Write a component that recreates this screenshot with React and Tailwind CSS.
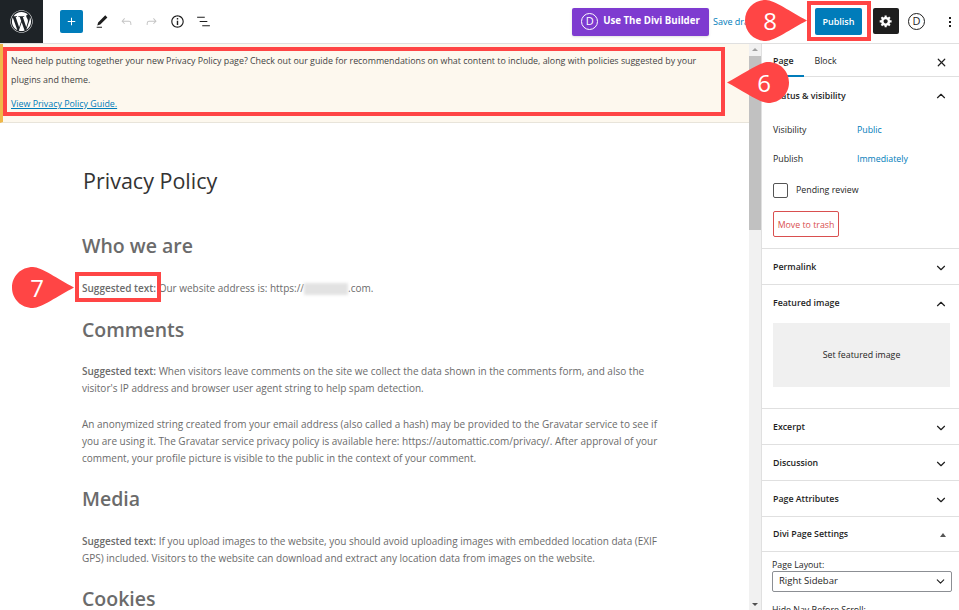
import { FaWordpress } from "react-icons/fa";
import { ChevronDown, ChevronUp, X } from "lucide-react";

function Icon({ d, className = "", box = "0 0 24 24" }) {
  return (
    <svg viewBox={box} className={className} fill="currentColor">
      <path d={d} />
    </svg>
  );
}

function DiviMark({ className }) {
  return (
    <span className={`flex items-center justify-center rounded-full border-[1.5px] ${className}`}>D</span>
  );
}

function Pointer({ n, className, tipRight }) {
  return (
    <div className={`absolute w-[62px] h-[41px] ${className}`}>
      <svg viewBox="0 0 62 41" className="absolute inset-0 w-full h-full" fill="#ff4545">
        {tipRight ? (
          <path d="M21 0C29 0 46 12 62 20.5C46 29 29 41 21 41C9 41 0 32 0 20.5S9 0 21 0z" />
        ) : (
          <path d="M41 0C33 0 16 12 0 20.5C16 29 33 41 41 41C53 41 62 32 62 20.5S53 0 41 0z" />
        )}
      </svg>
      <span
        className={`absolute top-0 h-[41px] w-[50px] flex items-center justify-center text-white text-[24px] ${tipRight ? "left-0" : "right-0"}`}
      >
        {n}
      </span>
    </div>
  );
}

function PanelRow({ title, children }) {
  return (
    <div className="flex items-center justify-between h-[36px] pt-[2px] px-[11px] border-t border-[#e0e0e0]">
      <span className="text-[8.8px] font-semibold text-[#1e1e1e]">{title}</span>
      {children || <ChevronDown size={14} strokeWidth={2} className="text-[#1e1e1e]" />}
    </div>
  );
}

function Heading({ className, children }) {
  return <h2 className={`text-[19.5px] leading-[30px] font-semibold ${className}`}>{children}</h2>;
}

function Para({ className, children }) {
  return <p className={`text-[10px] leading-[17px] ${className}`}>{children}</p>;
}

export default function App() {
  return (
    <div className="relative w-[959px] h-[610px] overflow-hidden bg-white flex flex-col font-['Open_Sans',sans-serif]">
      {/* top toolbar */}
      <header className="flex items-center h-[44px] shrink-0 border-b border-[#e0e0e0]">
        <div className="w-[43px] h-[43px] bg-[#1e2327] flex items-center justify-center text-white">
          <FaWordpress size={23} />
        </div>
        <div className="flex items-center ml-[17px] h-full">
          <button className="w-[23px] h-[23px] rounded-[2px] bg-[#007cba] flex items-center justify-center text-white">
            <Icon d="M18 11.2h-5.2V6h-1.6v5.2H6v1.6h5.2V18h1.6v-5.2H18z" className="w-[15px] h-[15px]" />
          </button>
          <Icon d="M20.1 5.1L16.9 2 6.2 12.7l-1.3 4.4 4.5-1.3L20.1 5.1zM4 20.8h8v-1.5H4v1.5z" className="w-[16px] h-[16px] ml-[11px] text-[#1e1e1e]" />
          <Icon d="M18.3 11.7c-.6-.6-1.4-.9-2.3-.9H6.7l2.9-3.3-1.1-1-4.5 5L8.5 16l1-1-2.7-2.7H16c.5 0 .9.2 1.3.5 1 1 1 3.4 1 4.5v.3h1.5v-.2c0-1.5 0-4.3-1.5-5.7z" className="w-[15px] h-[15px] ml-[9px] text-[#c4c4c4]" />
          <Icon d="M15.6 6.5l-1.1 1 2.9 3.3H8c-.9 0-1.7.3-2.3.9-1.4 1.5-1.4 4.2-1.4 5.6v.2h1.5v-.3c0-1.1 0-3.5 1-4.5.3-.3.7-.5 1.3-.5h9.2L14.5 15l1.1 1.1 4.6-4.6-4.6-5z" className="w-[15px] h-[15px] ml-[10px] text-[#c4c4c4]" />
          <Icon d="M12 3.2c-4.8 0-8.8 3.9-8.8 8.8 0 4.8 3.9 8.8 8.8 8.8 4.8 0 8.8-3.9 8.8-8.8 0-4.8-4-8.8-8.8-8.8zm0 16c-4 0-7.2-3.3-7.2-7.2C4.8 8 8 4.8 12 4.8s7.2 3.3 7.2 7.2c0 4-3.2 7.2-7.2 7.2zM11 17h2v-6h-2v6zm0-8h2V7h-2v2z" className="w-[17px] h-[17px] ml-[10px] text-[#1e1e1e]" />
          <Icon d="M13.8 5.2H3v1.5h10.8V5.2zm-3.6 12v1.5H21v-1.5H10.2zm7.2-6H6.6v1.5h10.8v-1.5z" className="w-[17px] h-[17px] ml-[9px] text-[#1e1e1e]" />
        </div>
        <div className="ml-auto flex items-center h-full">
          <button className="w-[137px] h-[28px] rounded-[2px] bg-[#7e3bd0] text-white flex items-center justify-center gap-[5px] text-[9.7px] font-bold shadow-sm">
            <DiviMark className="w-[17px] h-[17px] border-white font-normal text-[11px]" />
            Use The Divi Builder
          </button>
          <span className="ml-[4px] text-[9px] text-[#007cba] w-[102px] whitespace-nowrap">Save draft</span>
          <button className="w-[47px] h-[27px] rounded-[2px] bg-[#007cba] text-white text-[9px] font-semibold">Publish</button>
          <div className="ml-[11px] mb-px w-[26px] h-[26px] rounded-[2px] bg-[#1e1e1e] flex items-center justify-center text-white">
            <Icon box="0 0 20 20" d="M18 12h-2.18c-.17.7-.44 1.35-.81 1.93l1.54 1.54-2.1 2.1-1.54-1.54c-.58.36-1.23.63-1.91.79V19H8v-2.18c-.68-.16-1.33-.43-1.91-.79l-1.54 1.54-2.12-2.12 1.54-1.54c-.36-.58-.63-1.23-.79-1.91H1V9.03h2.17c.16-.7.44-1.35.8-1.94L2.43 5.55l2.1-2.1 1.54 1.54c.58-.37 1.24-.64 1.93-.81V2h3v2.18c.68.16 1.33.43 1.91.79l1.54-1.54 2.12 2.12-1.54 1.54c.36.59.64 1.24.8 1.94H18V12zm-8.5 1.5c1.66 0 3-1.34 3-3s-1.34-3-3-3-3 1.34-3 3 1.34 3 3 3z" className="w-[14px] h-[14px]" />
          </div>
          <DiviMark className="ml-[9px] w-[17px] h-[17px] border-[#1e1e1e] text-[#1e1e1e] text-[11px]" />
          <div className="ml-[24px] mr-[8px] flex flex-col gap-[2px]">
            <span className="w-[2px] h-[2px] bg-[#1e1e1e]" />
            <span className="w-[2px] h-[2px] bg-[#1e1e1e]" />
            <span className="w-[2px] h-[2px] bg-[#1e1e1e]" />
          </div>
        </div>
      </header>

      <div className="flex flex-1 min-h-0">
        {/* editor */}
        <main className="w-[749px] shrink-0 overflow-hidden text-[#6b6b6b]">
          <div className="h-[79px] bg-[#fdf8ee] border-l-[3px] border-[#f0b849] border-b border-b-[#e8e4da] pl-[8px] pt-[8px] text-[8.87px] leading-[19px] text-[#444]">
            <p className="w-[700px]">
              Need help putting together your new Privacy Policy page? Check out our guide for recommendations on what content to include, along with policies suggested by your plugins and theme.
            </p>
            <a className="block mt-[5px] text-[#007cba] underline">View Privacy Policy Guide.</a>
          </div>
          <article className="pl-[82px] w-[672px]">
            <h1 className="mt-[42px] ml-px text-[21.5px] leading-[32px] text-[#333]">Privacy Policy</h1>
            <Heading className="mt-[34px]">Who we are</Heading>
            <Para className="mt-[19px]">
              <strong className="font-semibold">Suggested text:</strong> Our website address is: https://
              <span className="inline-block w-[44px] h-[12px] align-middle bg-[#e2e2e2] blur-[1.5px]" />
              .com.
            </Para>
            <Heading className="mt-[18px]">Comments</Heading>
            <Para className="mt-[18px]">
              <strong className="font-semibold">Suggested text:</strong> When visitors leave comments on the site we collect the data shown in the comments form, and also the visitor's IP address and browser user agent string to help spam detection.
            </Para>
            <Para className="mt-[19px]">
              An anonymized string created from your email address (also called a hash) may be provided to the Gravatar service to see if you are using it. The Gravatar service privacy policy is available here: https://automattic.com/privacy/. After approval of your comment, your profile picture is visible to the public in the context of your comment.
            </Para>
            <Heading className="mt-[17px]">Media</Heading>
            <Para className="mt-[19px]">
              <strong className="font-semibold">Suggested text:</strong> If you upload images to the website, you should avoid uploading images with embedded location data (EXIF GPS) included. Visitors to the website can download and extract any location data from images on the website.
            </Para>
            <Heading className="mt-[17px]">Cookies</Heading>
          </article>
        </main>

        {/* editor scrollbar */}
        <div className="w-[12px] shrink-0 bg-[#f1f1f1] flex flex-col items-center">
          <span className="mt-[4px] w-0 h-0 border-x-[3px] border-x-transparent border-b-[3px] border-b-[#a0a0a0]" />
          <div className="mt-[5px] w-full h-[174px] bg-[#c1c1c1]" />
          <span className="mt-auto mb-[4px] w-0 h-0 border-x-[3px] border-x-transparent border-t-[3px] border-t-[#505050]" />
        </div>

        {/* settings sidebar */}
        <aside className="w-[198px] shrink-0 border-l border-[#e0e0e0] overflow-hidden text-[#1e1e1e]">
          <div className="relative flex items-center h-[33px] pt-[4px] px-[11px] border-b border-[#e0e0e0] text-[8.8px] gap-[21px]">
            <span className="font-semibold">Page</span>
            <span>Block</span>
            <X size={13} className="ml-auto" strokeWidth={2.2} />
            <span className="absolute left-0 -bottom-px w-[42px] h-[2px] bg-[#007cba]" />
          </div>
          <div className="px-[11px] pb-[11px]">
            <div className="flex items-center justify-between h-[36px] pt-[2px]">
              <span className="mt-[2px] text-[8.8px] font-semibold">Status &amp; visibility</span>
              <ChevronUp size={14} strokeWidth={2} />
            </div>
            <div className="grid grid-cols-[84px_1fr] text-[8.8px] leading-[13px] mt-[11px] gap-y-[16px]">
              <span>Visibility</span>
              <span className="text-[#007cba]">Public</span>
              <span>Publish</span>
              <span className="text-[#007cba]">Immediately</span>
            </div>
            <div className="flex items-center gap-[8px] mt-[17px] text-[8.8px]">
              <span className="w-[15px] h-[15px] rounded-[2px] border border-[#555]" />
              <span className="mt-[1px]">Pending review</span>
            </div>
            <button className="mt-[13px] block w-[66px] h-[26px] pt-[4px] rounded-[2px] border border-[#d94f4f] text-[#d94f4f] text-[8.8px]">Move to trash</button>
          </div>
          <PanelRow title="Permalink" />
          <PanelRow title="Featured image">
            <ChevronUp size={14} strokeWidth={2} />
          </PanelRow>
          <div className="pl-[11px] pr-[9px] pt-[3px] pb-[21px]">
            <div className="h-[64px] pt-[2px] bg-[#f0f0f0] flex items-center justify-center text-[8.8px]">Set featured image</div>
          </div>
          <PanelRow title="Excerpt" />
          <PanelRow title="Discussion" />
          <PanelRow title="Page Attributes" />
          <div className="flex items-center justify-between h-[36px] pt-[2px] px-[11px] border-y border-[#e0e0e0]">
            <span className="text-[8.8px] font-semibold">Divi Page Settings</span>
            <span className="mr-[2px] w-0 h-0 border-x-[3px] border-x-transparent border-b-[4px] border-b-[#555]" />
          </div>
          <div className="pl-[10px] pr-[7px] pt-[7px] text-[8.8px]">
            <div className="leading-[12px]">Page Layout:</div>
            <div className="h-[21px] border border-[#8c8f94] rounded-[2px] flex items-center justify-between pl-[6px] pr-[4px] text-[9.5px]">
              Right Sidebar
              <ChevronDown size={13} />
            </div>
            <div className="mt-[12px] leading-[12px] whitespace-nowrap">Hide Nav Before Scroll:</div>
          </div>
        </aside>
      </div>

      {/* annotations over the screenshot */}
      <div className="absolute left-[3px] top-[47px] w-[722px] h-[69px] border-4 border-[#ff4545]" />
      <div className="absolute left-[75px] top-[272px] w-[86px] h-[30px] border-4 border-[#ff4545]" />
      <div className="absolute left-[807px] top-[1px] w-[64px] h-[40px] border-4 border-[#ff4545]" />
      <Pointer n="6" className="left-[727px] top-[62px]" />
      <Pointer n="7" className="left-[12px] top-[267px]" tipRight />
      <Pointer n="8" className="left-[745px] top-[0px]" tipRight />
    </div>
  );
}
